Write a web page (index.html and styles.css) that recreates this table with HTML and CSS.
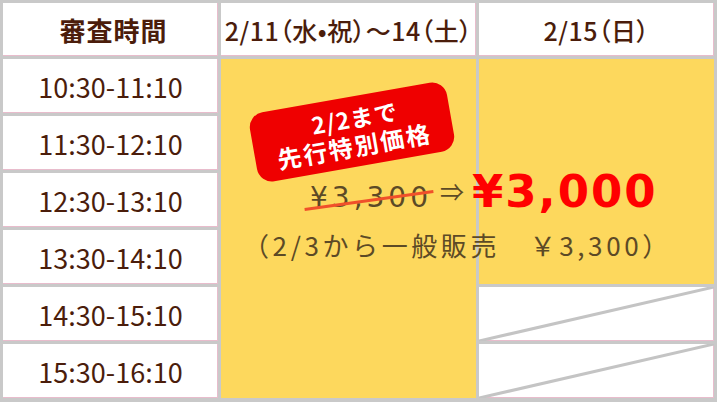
FILE: index.html
```html
<!DOCTYPE html>
<html lang="ja">
<head>
<meta charset="utf-8">
<link rel="stylesheet" href="styles.css">
</head>
<body>
<div class="table">
  <div class="cell head main">審査時間</div>
  <div class="cell head date">2/11（水•祝）～14（土）</div>
  <div class="cell head date">2/15（日）</div>

  <div class="cell time r1">10:30-11:10</div>
  <div class="cell time r2">11:30-12:10</div>
  <div class="cell time r3">12:30-13:10</div>
  <div class="cell time r4">13:30-14:10</div>
  <div class="cell time r5">14:30-15:10</div>
  <div class="cell time r6">15:30-16:10</div>

  <div class="open open-a"></div>
  <div class="open open-b"></div>

  <div class="cell closed r5c">
    <svg class="slash" viewBox="0 0 100 100" preserveAspectRatio="none"><line x1="0" y1="100" x2="100" y2="0" vector-effect="non-scaling-stroke"/></svg>
  </div>
  <div class="cell closed r6c">
    <svg class="slash" viewBox="0 0 100 100" preserveAspectRatio="none"><line x1="0" y1="100" x2="100" y2="0" vector-effect="non-scaling-stroke"/></svg>
  </div>

  <div class="badge"><span class="b1">2/2まで</span><span class="b2">先行特別価格</span></div>

  <div class="price">
    <span class="old">¥3,300</span><span class="arrow">⇒</span><span class="new">¥3,000</span>
  </div>
  <div class="note">（2/3から一般販売　￥3,300）</div>
</div>
</body>
</html>
```
FILE: styles.css
```css
html, body {
  margin: 0;
  padding: 0;
}
body {
  width: 717px;
  height: 402px;
  overflow: hidden;
  background: #c9c9c9;
  font-family: "Noto Sans CJK JP", "Noto Sans", sans-serif;
  color: #4b1d0b;
}
.table {
  position: relative;
  display: grid;
  grid-template-columns: 215px 255px 235px;
  grid-template-rows: 53px repeat(6, 54px);
  gap: 3px;
  padding: 3px 3px 4px 3px;
  background: #c9c9c9;
}
.cell {
  background: #fff;
  box-shadow: inset -1px -1px 0 #e8bccc;
  display: flex;
  align-items: center;
  justify-content: center;
}
.head {
  font-size: 26px;
  font-weight: 700;
  letter-spacing: 1px;
}
.head.main {
  padding-left: 6px;
}
.head.date {
  font-size: 25px;
  font-weight: 500;
  letter-spacing: 0.5px;
  font-feature-settings: "palt";
}
.time {
  grid-column: 1;
  font-size: 27px;
  font-weight: 400;
}
.r1 { grid-row: 2; }
.r2 { grid-row: 3; }
.r3 { grid-row: 4; }
.r4 { grid-row: 5; }
.r5 { grid-row: 6; }
.r6 { grid-row: 7; }
.open {
  background: #fdd85d;
}
.open-a {
  grid-column: 2;
  grid-row: 2 / 8;
}
.open-b {
  grid-column: 3;
  grid-row: 2 / 6;
}
.closed {
  grid-column: 3;
  position: relative;
}
.r5c { grid-row: 6; }
.r6c { grid-row: 7; }
.slash {
  position: absolute;
  inset: 0;
  width: 100%;
  height: 100%;
}
.slash line {
  stroke: #c4c4c4;
  stroke-width: 3;
}
.badge {
  position: absolute;
  left: 252px;
  top: 97px;
  width: 200px;
  height: 70px;
  background: #ef0000;
  border-radius: 15px;
  transform: rotate(-10deg);
  color: #fff;
  font-weight: 700;
  display: flex;
  flex-direction: column;
  align-items: center;
  justify-content: center;
  line-height: 28px;
}
.b1 {
  font-size: 23px;
  letter-spacing: 1px;
  margin-left: 10px;
}
.b2 {
  font-size: 24px;
  letter-spacing: 2px;
}
.price {
  position: absolute;
  left: 310px;
  top: 165px;
  display: flex;
  align-items: baseline;
  white-space: nowrap;
}
.old {
  position: relative;
  font-family: "DejaVu Sans", sans-serif;
  font-size: 28px;
  color: #5c4a26;
  letter-spacing: 4px;
}
.old::after {
  content: "";
  position: absolute;
  left: -6px;
  right: -2px;
  top: 55%;
  height: 3px;
  background: #f0502a;
  transform: rotate(-8deg);
}
.arrow {
  font-size: 24px;
  color: #5c4a26;
  margin: 0 8px 0 8px;
  position: relative;
  top: -6px;
}
.new {
  font-family: "DejaVu Sans", sans-serif;
  font-size: 45px;
  font-weight: 700;
  color: #ff0000;
  letter-spacing: 2px;
}
.note {
  position: absolute;
  left: 243px;
  top: 226px;
  font-size: 26px;
  color: #5c4a26;
  white-space: nowrap;
  letter-spacing: 3.6px;
}
```
